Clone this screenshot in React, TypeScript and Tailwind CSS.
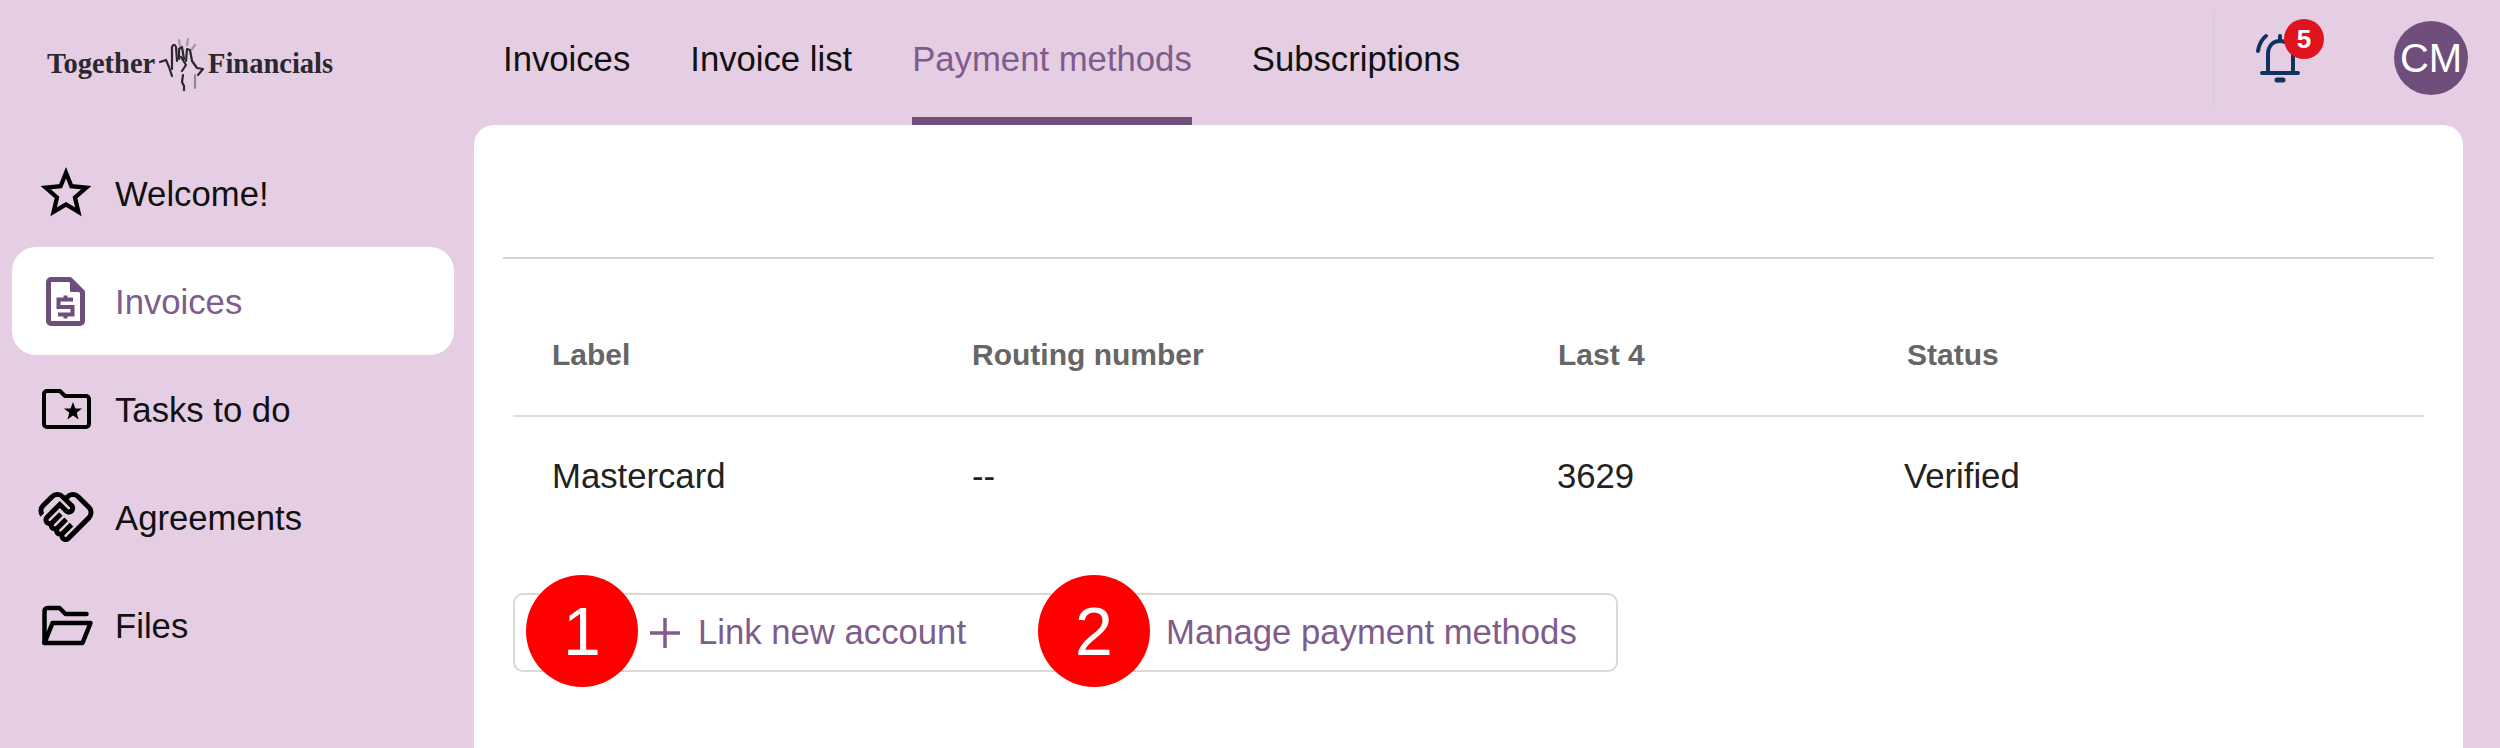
import { MdOutlineHandshake } from 'react-icons/md'
import type { ReactNode } from 'react'

const SANS = "font-['Liberation_Sans',Arial,sans-serif]"

const TABS = [
  { label: 'Invoices', active: false },
  { label: 'Invoice list', active: false },
  { label: 'Payment methods', active: true },
  { label: 'Subscriptions', active: false },
]

function StarIcon() {
  return (
    <svg viewBox="0 0 24 24" className="w-[54px] h-[54px]" fill="none" stroke="currentColor" strokeWidth="1.9">
      <path d="M21 9.6l-6.6-.6L12 3 9.6 9 3 9.6l5 4.4-1.5 6.4 5.5-3.3 5.5 3.3L16 14l5-4.4z" />
    </svg>
  )
}

function InvoiceIcon() {
  return (
    <svg viewBox="0 0 39 49" className="w-[39px] h-[49px]" fill="none" stroke="currentColor" strokeWidth="5" strokeLinejoin="round">
      <path d="M5 2.5h19l12.5 12.5v29a2.5 2.5 0 0 1-2.5 2.5H5a2.5 2.5 0 0 1-2.5-2.5v-39a2.5 2.5 0 0 1 2.5-2.5z" />
      <path d="M25 3v11h11z" fill="currentColor" strokeWidth="2" />
      <path d="M27 22.5H12.5v7.5h14v7.5H12M19.5 18.5v4M19.5 37.5v4" strokeWidth="4" strokeLinejoin="miter" />
    </svg>
  )
}

function FolderStarIcon() {
  return (
    <svg viewBox="0 0 50 42" className="w-[50px] h-[42px]" fill="none" stroke="currentColor" strokeWidth="4">
      <path d="M3 36V6a3 3 0 0 1 3-3h13l5 5h21a3 3 0 0 1 3 3v25a3 3 0 0 1-3 3H6a3 3 0 0 1-3-3z" />
      <polygon points="32,14 34.4,20.5 41,20.5 35.7,24.8 37.6,31.5 32,27.5 26.4,31.5 28.3,24.8 23,20.5 29.6,20.5" fill="currentColor" stroke="none" />
    </svg>
  )
}

function FolderOpenIcon() {
  return (
    <svg viewBox="-1.5 0 56 45" className="w-[56px] h-[45px]" fill="none" stroke="currentColor" strokeWidth="4.5" strokeLinejoin="round" strokeLinecap="round">
      <path d="M5 40V8a3 3 0 0 1 3-3h12l6 6h21" />
      <path d="M5 40l8-20h38l-8 20z" />
    </svg>
  )
}

const SIDE_ITEMS: { label: string; icon: ReactNode; active?: boolean }[] = [
  { label: 'Welcome!', icon: <StarIcon /> },
  { label: 'Invoices', icon: <InvoiceIcon />, active: true },
  { label: 'Tasks to do', icon: <FolderStarIcon /> },
  { label: 'Agreements', icon: <MdOutlineHandshake className="text-[60px]" /> },
  { label: 'Files', icon: <FolderOpenIcon /> },
]

function HandMark() {
  return (
    <svg viewBox="0 0 51 54" className="w-[51px] h-[54px] shrink-0" fill="none" stroke="#2b2730" strokeWidth="2.2" strokeLinecap="round" strokeLinejoin="round">
      <path d="M3 25l6-2 3 7 3 9" />
      <path d="M15 32V10c1-3 3-3 4 0l1 14" />
      <path d="M22 22V12l3-2 2 12" />
      <path d="M29 24l1-12 3 1 2 11 5 7 6 1-5 6" />
      <path d="M24 20l5 8-4 6" />
      <path d="M26 38l-1 7 2 4v6" />
      <path d="M38 38v13" stroke="#8d8793" />
      <path d="M22 3l1 6M31 2l-1 6M38 8l-3 4" stroke="#a598a6" />
    </svg>
  )
}

function BellIcon() {
  return (
    <svg viewBox="0 0 50 52" className="w-[50px] h-[52px]" fill="none" stroke="#0f3460" strokeWidth="4" strokeLinecap="round">
      <path d="M12 4c-4 3-7 9-8 15" />
      <path d="M14 41V22c0-8 5-13 12-13s13 5 13 13v19" />
      <path d="M26 4v5" />
      <path d="M8 41h36" />
      <path d="M23 48h6" strokeWidth="5" />
    </svg>
  )
}

export default function App() {
  return (
    <div className={`${SANS} w-[2500px] h-[748px] overflow-hidden bg-[#e5cee3] flex flex-col text-[34.7px] leading-none`}>
      <header className="h-[125px] shrink-0 flex">
        <div className="w-[503px] shrink-0 pl-[47px] pt-[37px] flex items-start">
          <div className="flex items-center font-['Liberation_Serif',serif] font-bold text-[28.5px] text-[#2b2730]">
            <span className="w-[110px]">Together</span>
            <HandMark />
            <span>Financials</span>
          </div>
        </div>
        <nav className="flex gap-[60px]">
          {TABS.map(tab => (
            <div
              key={tab.label}
              className={`h-full pt-[42px] border-b-[8px] ${tab.active ? 'border-[#6f4e7c] text-[#7f5c8c]' : 'border-transparent text-[#111]'}`}
            >
              {tab.label}
            </div>
          ))}
        </nav>
        <div className="ml-auto flex items-start pr-[32px]">
          <div className="mt-[10px] w-[2px] h-[97px] bg-[#d6cfd3]" />
          <div className="relative ml-[39px] mt-[32px]">
            <BellIcon />
            <span className="absolute left-[30px] top-[-13px] w-[40px] h-[40px] rounded-full bg-[#e0141f] text-white font-bold text-[26px] flex items-center justify-center">
              5
            </span>
          </div>
          <div className="ml-[90px] mt-[21px] w-[74px] h-[74px] rounded-full bg-[#6f4e7c] text-white text-[40px] flex items-center justify-center">
            CM
          </div>
        </div>
      </header>

      <div className="flex-1 flex min-h-0">
        <aside className="w-[474px] shrink-0 pl-[12px] pr-[20px] pt-[14px] flex flex-col">
          {SIDE_ITEMS.map(item => (
            <div
              key={item.label}
              className={`h-[108px] rounded-[24px] flex items-center ${item.active ? 'bg-white text-[#7f5c8c]' : 'text-[#111]'}`}
            >
              <span className={`w-[103px] flex justify-center pl-[4px] shrink-0 ${item.active ? 'text-[#6f4e7c]' : 'text-black'}`}>
                {item.icon}
              </span>
              <span className="pt-[2px]">{item.label}</span>
            </div>
          ))}
        </aside>

        <main className="w-[1989px] bg-white rounded-t-[20px] px-[29px]">
          <div className="h-[134px] border-b-2 border-[#d9d5d1]" />
          <div className="px-[10px]">
            <div className="h-[158px] grid grid-cols-[420px_586px_349px_1fr] items-center pl-[39px] pt-[35px] border-b-2 border-[#e0dcd8] font-bold text-[#666] text-[30px]">
              <span>Label</span>
              <span>Routing number</span>
              <span>Last 4</span>
              <span>Status</span>
            </div>
            <div className="h-[118px] grid grid-cols-[420px_585px_347px_1fr] items-center pl-[39px] text-[#222]">
              <span>Mastercard</span>
              <span>--</span>
              <span>3629</span>
              <span>Verified</span>
            </div>
            <div className="relative mt-[58px] w-[1105px] h-[79px] rounded-[10px] border-2 border-[#dcd8d3] flex items-center text-[#7f5c8c]">
              <svg viewBox="0 0 32 32" className="ml-[134px] w-[32px] h-[32px] shrink-0" fill="none" stroke="#7f5c8c" strokeWidth="3.5">
                <path d="M16 1v30M1 16h30" />
              </svg>
              <span className="ml-[17px]">Link new account</span>
              <span className="ml-[200px]">Manage payment methods</span>
              <span className="absolute left-[11px] top-[-20px] w-[112px] h-[112px] rounded-full bg-[#ff0000] text-white text-[68px] flex items-center justify-center">1</span>
              <span className="absolute left-[523px] top-[-20px] w-[112px] h-[112px] rounded-full bg-[#ff0000] text-white text-[68px] flex items-center justify-center">2</span>
            </div>
          </div>
        </main>
      </div>
    </div>
  )
}
